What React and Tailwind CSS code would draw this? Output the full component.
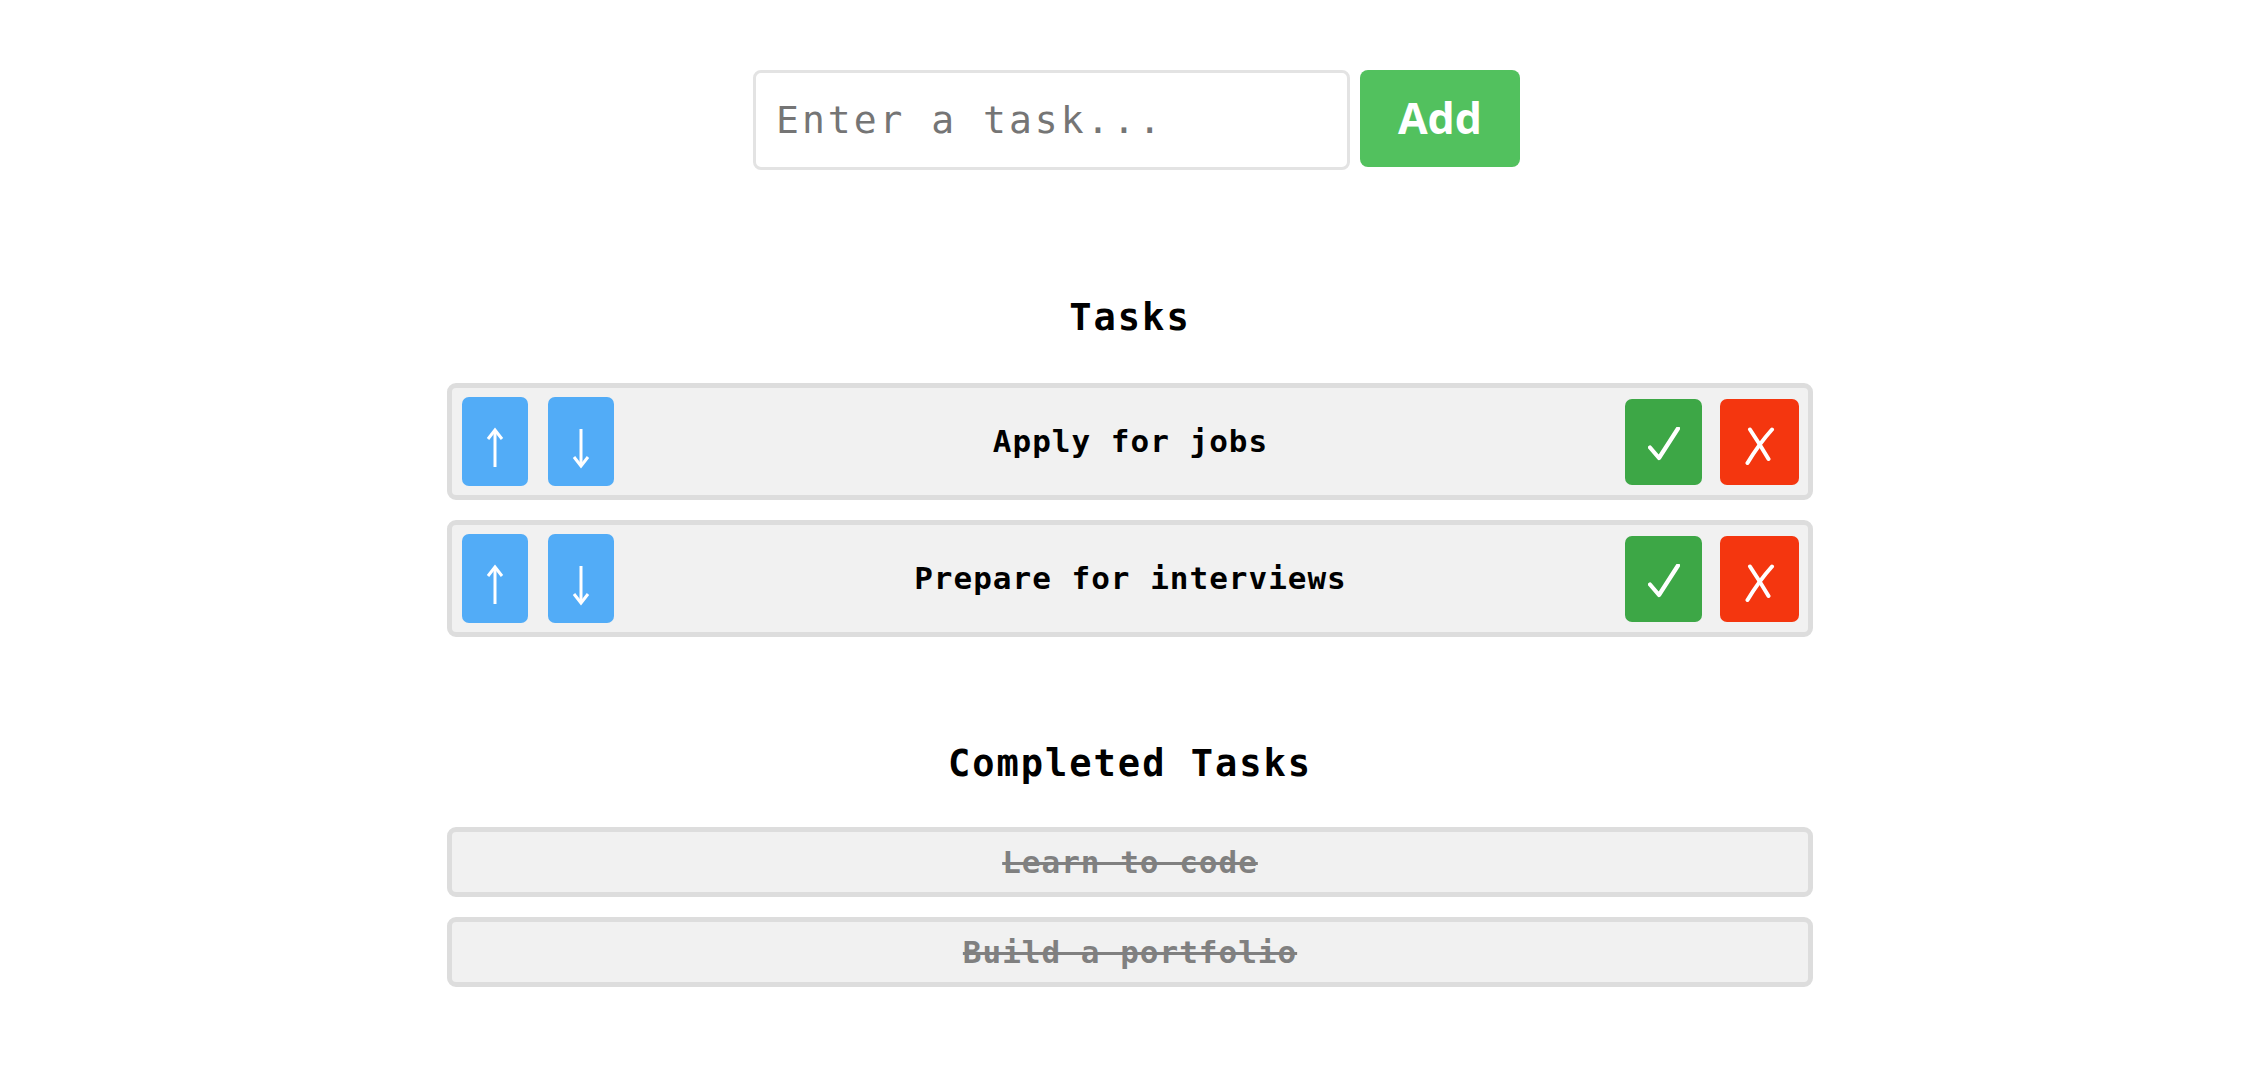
import { useState } from "react";

const mono = { fontFamily: '"DejaVu Sans Mono", "Liberation Mono", monospace' };

function ArrowIcon({ down }) {
  return (
    <svg width="20" height="42" viewBox="0 0 20 42" className={down ? "rotate-180" : ""}>
      <path d="M10 40V3" stroke="white" strokeWidth="3" fill="none" />
      <path d="M3 12L10 3L17 12" stroke="white" strokeWidth="3" fill="none" strokeLinejoin="miter" />
    </svg>
  );
}

function CheckIcon() {
  return (
    <svg width="32" height="34" viewBox="0 0 32 34" className="mt-[5px]">
      <path d="M2 20.5L11 31L30 1.5" stroke="white" strokeWidth="4.2" fill="none" strokeLinecap="round" strokeLinejoin="round" />
    </svg>
  );
}

function CrossIcon() {
  return (
    <svg width="30" height="38" viewBox="0 0 30 38" className="mt-[9px]">
      <path d="M5 2.5Q14 16 23.5 32" stroke="white" strokeWidth="4" fill="none" strokeLinecap="round" />
      <path d="M27 2.5Q14 17 2.5 36" stroke="white" strokeWidth="4" fill="none" strokeLinecap="round" />
    </svg>
  );
}

function TaskRow({ text, onUp, onDown, onDone, onDelete }) {
  return (
    <li className="grid grid-cols-[1fr_auto_1fr] items-center h-[117px] pl-[10px] pr-[9px] bg-[#f1f1f1] border-[5px] border-[#dddddd] rounded-[9px]">
      <div className="flex gap-[20px]">
        <button
          onClick={onUp}
          className="w-[66px] h-[89px] pt-[12px] rounded-[7px] bg-[#52acf7] flex items-center justify-center"
        >
          <ArrowIcon />
        </button>
        <button
          onClick={onDown}
          className="w-[66px] h-[89px] pt-[12px] rounded-[7px] bg-[#52acf7] flex items-center justify-center"
        >
          <ArrowIcon down />
        </button>
      </div>
      <span className="text-[31px] tracking-[1px] font-bold text-black" style={mono}>
        {text}
      </span>
      <div className="flex gap-[18px] justify-self-end">
        <button
          onClick={onDone}
          className="w-[77px] h-[86px] rounded-[7px] bg-[#3da746] flex items-center justify-center"
        >
          <CheckIcon />
        </button>
        <button
          onClick={onDelete}
          className="w-[79px] h-[86px] rounded-[7px] bg-[#f4360f] flex items-center justify-center"
        >
          <CrossIcon />
        </button>
      </div>
    </li>
  );
}

export default function App() {
  const [tasks, setTasks] = useState(["Apply for jobs", "Prepare for interviews"]);
  const [done, setDone] = useState(["Learn to code", "Build a portfolio"]);
  const [draft, setDraft] = useState("");

  function add() {
    if (!draft.trim()) return;
    setTasks([...tasks, draft.trim()]);
    setDraft("");
  }

  function move(i, dir) {
    const j = i + dir;
    if (j < 0 || j >= tasks.length) return;
    const next = [...tasks];
    [next[i], next[j]] = [next[j], next[i]];
    setTasks(next);
  }

  return (
    <div className="min-h-screen bg-white pt-[70px] pl-[19px] flex flex-col items-center" style={mono}>
      {/* Input */}
      <div className="flex items-start gap-[10px] ml-[13px]">
        <input
          value={draft}
          onChange={(e) => setDraft(e.target.value)}
          placeholder="Enter a task..."
          className="w-[597px] h-[100px] px-[20px] border-[3px] border-[#e3e3e3] rounded-[8px] text-[38px] tracking-[3px] text-black placeholder:text-[#757575] outline-none"
          style={mono}
        />
        <button
          onClick={add}
          className="w-[160px] h-[97px] rounded-[8px] bg-[#52c15e] text-white text-[43px] font-bold"
          style={{ fontFamily: '"Open Sans", "Noto Sans", sans-serif' }}
        >
          Add
        </button>
      </div>

      {/* Tasks */}
      <h2 className="mt-[125px] h-[46px] leading-[46px] text-[37px] tracking-[2px] font-bold text-black">Tasks</h2>
      <ul className="mt-[42px] w-[1366px] flex flex-col gap-[20px]">
        {tasks.map((t, i) => (
          <TaskRow
            key={t}
            text={t}
            onUp={() => move(i, -1)}
            onDown={() => move(i, 1)}
            onDone={() => {
              setTasks(tasks.filter((_, k) => k !== i));
              setDone([...done, t]);
            }}
            onDelete={() => setTasks(tasks.filter((_, k) => k !== i))}
          />
        ))}
      </ul>

      {/* Completed */}
      <h2 className="mt-[104px] h-[46px] leading-[46px] text-[37px] tracking-[2px] font-bold text-black">
        Completed Tasks
      </h2>
      <ul className="mt-[40px] w-[1366px] flex flex-col gap-[20px]">
        {done.map((t) => (
          <li
            key={t}
            className="h-[70px] flex items-center justify-center bg-[#f1f1f1] border-[5px] border-[#dddddd] rounded-[9px]"
          >
            <span className="text-[31px] tracking-[1px] font-bold text-[#808080] line-through">{t}</span>
          </li>
        ))}
      </ul>
    </div>
  );
}
